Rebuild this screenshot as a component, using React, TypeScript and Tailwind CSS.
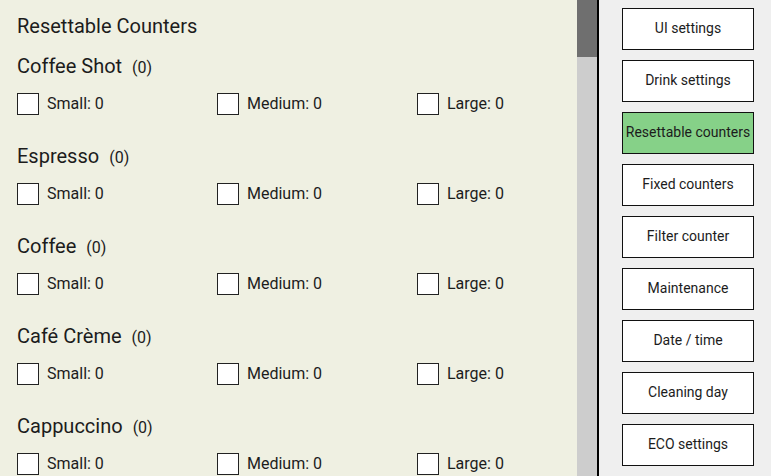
const drinks = ['Coffee Shot', 'Espresso', 'Coffee', 'Café Crème', 'Cappuccino']
const sizes = ['Small', 'Medium', 'Large']
const menu = [
  'UI settings',
  'Drink settings',
  'Resettable counters',
  'Fixed counters',
  'Filter counter',
  'Maintenance',
  'Date / time',
  'Cleaning day',
  'ECO settings',
]

const CounterRow = ({ name }: { name: string }) => (
  <div className="flex flex-col">
    <div className="flex h-[28px] items-baseline">
      <span className="text-[20px] leading-[28px]">{name}</span>
      <span className="ml-[10px] text-[16px]">(0)</span>
    </div>
    <div className="mt-[13px] flex h-[22px]">
      {sizes.map((s) => (
        <div key={s} className="flex w-[200px] shrink-0 items-center">
          <div className="h-[22px] w-[22px] shrink-0 border border-[#222] bg-white" />
          <span className="ml-[8px] whitespace-nowrap text-[16px] leading-[22px]">{s}: 0</span>
        </div>
      ))}
    </div>
  </div>
)

export default function App() {
  return (
    <div
      className="flex h-[476px] w-[771px] overflow-hidden text-[#1c1c1c]"
      style={{ fontFamily: 'Roboto, "Noto Sans", sans-serif' }}
    >
      <div className="w-[577px] shrink-0 overflow-hidden bg-[#eff0e2] pl-[17px] pt-[12px]">
        <div className="h-[28px] text-[20px] leading-[28px]">Resettable Counters</div>
        <div className="mt-[12px] flex flex-col gap-[27px]">
          {drinks.map((d) => (
            <CounterRow key={d} name={d} />
          ))}
        </div>
      </div>
      <div className="w-[20px] shrink-0 bg-[#cdcdcd]">
        <div className="h-[57px] bg-[#6f6f6f]" />
      </div>
      <div className="flex flex-1 flex-col gap-[10px] border-l-2 border-black bg-[#efefef] pl-[23px] pt-[8px]">
        {menu.map((m) => (
          <div
            key={m}
            className={`flex h-[42px] w-[132px] items-center justify-center border border-[#111] pb-[2px] text-[14px] ${
              m === 'Resettable counters' ? 'bg-[#86d188]' : 'bg-white'
            }`}
          >
            {m}
          </div>
        ))}
      </div>
    </div>
  )
}
